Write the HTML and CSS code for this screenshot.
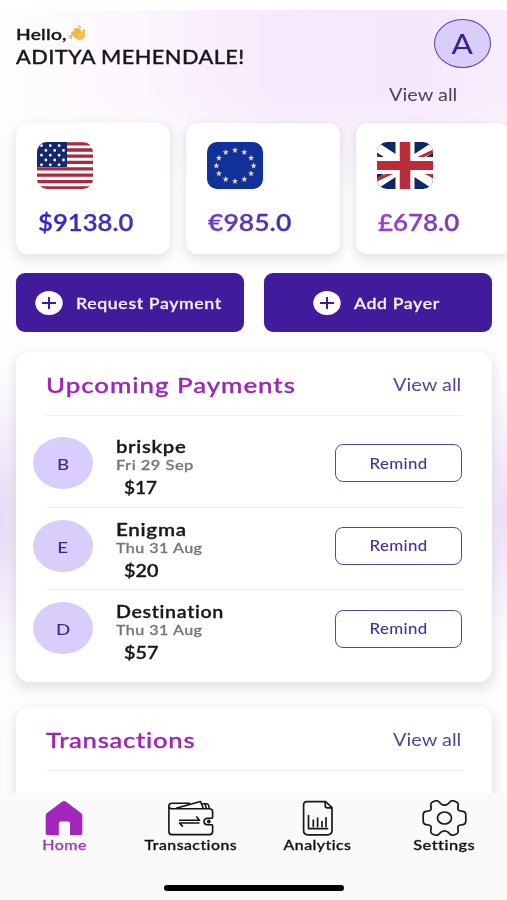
FILE: index.html
```html
<!DOCTYPE html>
<html lang="en">
<head>
<meta charset="utf-8">
<title>Payments</title>
<link rel="stylesheet" href="styles.css">
</head>
<body>
<div class="app">
  <header class="header">
    <div class="greeting">
      <div class="hello"><span class="t sx-120">Hello,</span>
        <svg class="wave" viewBox="0 0 18 17" width="18" height="17">
          <path d="M3.5 7.2 Q4 5.6 5.6 6.4 L6 3.6 Q7 2.2 8.4 3.4 L9.8 2.8 Q11.2 2.4 11.8 3.8 L14 7.2 Q14.2 4.6 15.8 3.8 Q17.6 4.4 17 7 Q17.8 11.5 15.2 13.8 Q11.6 16.4 7.6 13.2 L3 9.4 Q2.4 8 3.5 7.2Z" fill="#f3c04a"/>
          <path d="M4.4 7.6 L8.2 10.6 M6.4 4.8 L10 8.6 M9 4 L12 7.6" stroke="#d99a32" stroke-width=".8" fill="none"/>
          <path d="M10 .8 Q12.2 1 13 2.8 M.6 10.6 Q1.4 13 4 13.6 M2.2 9.8 Q2.8 11.6 4.4 12" stroke="#8d8a93" stroke-width=".9" fill="none"/>
        </svg>
      </div>
      <div class="user"><span class="t sx-119">ADITYA MEHENDALE!</span></div>
    </div>
    <div class="profile"><span class="t center sx-117">A</span></div>
  </header>
  <div class="accounts-link"><span class="t right sx-117">View all</span></div>

  <section class="accounts">
    <article class="account">
      <svg class="flag" viewBox="0 0 56 47" width="56" height="47">
        <path fill="#fff" d="M0 0h56v47H0z"/>
        <path stroke="#a82a3c" stroke-width="3.3" d="M0 1.8h56M0 8h56M0 14.2h56M0 20.4h56M0 26.8h56M0 33.2h56M0 39.6h56M0 45.8h56"/>
        <path fill="#142a6b" d="M0 0h30v25H0z"/>
        <g stroke="#fff" stroke-width="2.8" stroke-linecap="round" stroke-dasharray="0 8.8">
          <path d="M4.5 3.6H27M4.5 13.2H27M4.5 22.8H27"/><path d="M8.9 8.4H27M8.9 18H27"/>
        </g>
      </svg>
      <div class="amount usd"><span class="t sx-114">$9138.0</span></div>
    </article>
    <article class="account">
      <svg class="flag" viewBox="0 0 56 47" width="56" height="47">
        <path fill="#12309a" d="M0 0h56v47H0z"/>
        <defs><path id="star" fill="#e3d8a0" d="M0-3.1.9-1 3.1-1 1.3.5 1.9 2.8 0 1.5-1.9 2.8-1.3.5-3.1-1-.9-1z"/></defs>
        <use href="#star" x="28" y="8.2"/><use href="#star" x="37.3" y="10.3"/><use href="#star" x="44.1" y="15.9"/><use href="#star" x="46.6" y="23.7"/><use href="#star" x="44.1" y="31.5"/><use href="#star" x="37.3" y="37.2"/><use href="#star" x="28" y="39.3"/><use href="#star" x="18.7" y="37.2"/><use href="#star" x="11.9" y="31.5"/><use href="#star" x="9.4" y="23.7"/><use href="#star" x="11.9" y="15.9"/><use href="#star" x="18.7" y="10.3"/>
      </svg>
      <div class="amount eur"><span class="t sx-118">€985.0</span></div>
    </article>
    <article class="account">
      <svg class="flag" viewBox="0 0 56 47" width="56" height="47">
        <path fill="#102766" d="M0 0h56v47H0z"/>
        <path stroke="#fff" stroke-width="9" d="M-8 0 64 47M64 0-8 47"/>
        <path fill="#bb2c3b" d="M0 13.5 6 16H0zM38 16 56 7.5V11L45 16zM0 35.5 11 31h7L0 39.5zM45 31h11v4.5z"/>
        <path stroke="#fff" stroke-width="19" d="M28 0v47"/><path stroke="#fff" stroke-width="17" d="M0 23.5h56"/>
        <path stroke="#bb2c3b" stroke-width="10.5" d="M28 0v47"/><path stroke="#bb2c3b" stroke-width="9" d="M0 23.5h56"/>
      </svg>
      <div class="amount gbp"><span class="t sx-115">£678.0</span></div>
    </article>
  </section>

  <div class="actions">
    <button class="action request">
      <svg viewBox="0 0 28 24" width="28" height="24"><ellipse cx="14" cy="12" rx="13.7" ry="12" fill="#fff"/><path d="M7 12h14M14 6v12" stroke="#401b9b" stroke-width="2"/></svg>
      <span class="t sx-121">Request Payment</span>
    </button>
    <button class="action add">
      <svg viewBox="0 0 28 24" width="28" height="24"><ellipse cx="14" cy="12" rx="13.7" ry="12" fill="#fff"/><path d="M7 12h14M14 6v12" stroke="#401b9b" stroke-width="2"/></svg>
      <span class="t sx-121">Add Payer</span>
    </button>
  </div>

  <section class="panel upcoming">
    <div class="panel-head"><h2 class="t sx-123">Upcoming Payments</h2><a class="t right sx-117">View all</a></div>
    <ul class="payments">
      <li class="payment">
        <div class="avatar"><span class="t center sx-117">B</span></div>
        <div class="details"><div class="name"><span class="t sx-123">briskpe</span></div><div class="date"><span class="t sx-122">Fri 29 Sep</span></div><div class="sum"><span class="t sx-115">$17</span></div></div>
        <button class="remind"><span class="t center sx-118">Remind</span></button>
      </li>
      <li class="payment">
        <div class="avatar"><span class="t center sx-117">E</span></div>
        <div class="details"><div class="name"><span class="t sx-125">Enigma</span></div><div class="date"><span class="t sx-119">Thu 31 Aug</span></div><div class="sum"><span class="t sx-120">$20</span></div></div>
        <button class="remind"><span class="t center sx-118">Remind</span></button>
      </li>
      <li class="payment">
        <div class="avatar"><span class="t center sx-117">D</span></div>
        <div class="details"><div class="name"><span class="t sx-119">Destination</span></div><div class="date"><span class="t sx-119">Thu 31 Aug</span></div><div class="sum"><span class="t sx-120">$57</span></div></div>
        <button class="remind"><span class="t center sx-118">Remind</span></button>
      </li>
    </ul>
  </section>

  <section class="panel transactions">
    <div class="panel-head"><h2 class="t sx-122">Transactions</h2><a class="t right sx-117">View all</a></div>
    <ul class="payments"><li class="payment"><div class="avatar"></div></li></ul>
  </section>

  <nav class="tabs">
    <div class="tab-row">
      <a class="tab active">
        <svg viewBox="0 0 46 36" width="46" height="36"><path fill="#a226bd" d="M4.7 15.6Q4.7 14 6 13L21.3 1.6Q23 .4 24.7 1.6L40 13Q41.3 14 41.3 15.6V33.2Q41.3 35 39.4 35H29V23.2Q29 21.6 27.4 21.6H19.4Q17.8 21.6 17.8 23.2V35H6.6Q4.7 35 4.7 33.2Z"/></svg>
        <span class="t center sx-120">Home</span>
      </a>
      <a class="tab">
        <svg viewBox="0 0 46 36" width="46" height="36" fill="none" stroke="#111" stroke-width="1.6" stroke-linejoin="round">
          <path d="M.9 5V31.5Q.9 34.6 4 34.6H41.4Q44.6 34.6 44.6 31.5V25M44.6 18V11.5Q44.6 8.8 41.4 8.8H4.5Q.9 8.8.9 5.8Q.9 3.2 4.5 3.2H22M8 8.2 32.5 1.5 35.3 8.5M34.2 3.8H38.5Q41 4 41.2 8.5M37 4.5 38.4 8.5"/>
          <path d="M44.8 18.2H39.4Q36 18.6 36 21.4 36 24.4 39.4 24.8H44.8"/><circle cx="40.8" cy="21.5" r="1.1"/>
          <path d="M11 20.2H31.5L28.3 16.4M31.5 23H11.5L14.8 26.6"/>
        </svg>
        <span class="t center sx-119">Transactions</span>
      </a>
      <a class="tab">
        <svg viewBox="0 0 46 36" width="46" height="36" fill="none" stroke="#181818" stroke-width="1.7" stroke-linejoin="round" stroke-linecap="round">
          <path d="M12 1.6H30.6L37 7.6V30.6Q37 34.8 32.4 34.8H13Q8.6 34.8 8.6 30.6V5.4Q8.6 1.6 12 1.6ZM30.2 2V5.4Q30.2 7.8 32.6 7.8H36.5"/>
          <path d="M13.5 15.5V28.6H32.6M18.3 20V26.5M22.6 18V26.5M27 21.5V26.5M31 17.8V26.5"/>
        </svg>
        <span class="t center sx-119">Analytics</span>
      </a>
      <a class="tab">
        <svg viewBox="0 0 46 36" width="46" height="36" fill="none" stroke="#181818" stroke-width="1.7" stroke-linejoin="round">
          <path d="M1.2 15Q1.2 11.8 4 11.4L6.5 11Q9.8 10.4 9 7L8.8 5Q8.5 3 10.5 2L13 1Q15.5.2 17 1.8L19 3.8Q22.5 6.5 26 3.8L28 1.8Q29.5.2 32 1L34.5 2Q36.5 3 36.2 5L36 7Q35.2 10.4 38.5 11L41 11.4Q43.8 11.8 43.8 15V21Q43.8 24.2 41 24.6L38.5 25Q35.2 25.6 36 29L36.2 31Q36.5 33 34.5 34L32 35Q29.5 35.8 28 34.2L26 32.2Q22.5 29.5 19 32.2L17 34.2Q15.5 35.8 13 35L10.5 34Q8.5 33 8.8 31L9 29Q9.8 25.6 6.5 25L4 24.6Q1.2 24.2 1.2 21Z"/>
          <ellipse cx="22.5" cy="18" rx="7" ry="6"/>
        </svg>
        <span class="t center sx-123">Settings</span>
      </a>
    </div>
    <div class="home-bar"></div>
  </nav>
</div>
</body>
</html>
```
FILE: styles.css
```css
* { box-sizing: border-box; }
body { margin: 0; font-family: Lato, "Noto Sans", sans-serif; color: #19171c; }
h2, ul { margin: 0; padding: 0; font-weight: 500; list-style: none; }
button { font-family: inherit; padding: 0; border: 0; }

.app {
  width: 507px; height: 900px; overflow: hidden;
  display: flex; flex-direction: column;
  border-top: 10px solid #fff;
  background:
    radial-gradient(ellipse 34px 150px at 0 510px, #e6d8f5 0%, rgba(238, 226, 250, .6) 55%, transparent 100%),
    radial-gradient(ellipse 30px 140px at 100% 505px, #ebdff7 0%, rgba(240, 230, 251, .6) 55%, transparent 100%),
    linear-gradient(to bottom, transparent 80px, #fdfdfe 190px),
    linear-gradient(to right, #fefdfe 0, #fcf6fd 140px, #f7e8fc 280px, #f6e7fc 420px, #f9edfd 100%);
}

/* Wide letterforms */
.t { display: inline-block; white-space: nowrap; transform: scaleX(var(--sx)); transform-origin: left center; }
.right { transform-origin: right center; }
.center { transform-origin: center; }
.sx-114 { --sx: 1.14; }
.sx-115 { --sx: 1.15; }
.sx-117 { --sx: 1.17; }
.sx-118 { --sx: 1.18; }
.sx-119 { --sx: 1.19; }
.sx-120 { --sx: 1.2; }
.sx-121 { --sx: 1.21; }
.sx-122 { --sx: 1.22; }
.sx-123 { --sx: 1.23; }
.sx-125 { --sx: 1.25; }
.hello, .user, .amount, .action, .panel-head h2, .details, .tab { -webkit-text-stroke-width: .3px; }

.header { display: flex; justify-content: space-between; height: 73px; padding: 9px 16px 0; flex: none; }
.greeting { padding-top: 3px; }
.hello { display: flex; height: 24px; line-height: 23px; font-size: 16px; font-weight: 600; letter-spacing: .2px; }
.wave { margin: 3px 0 0 10px; }
.user { line-height: 23px; font-size: 18.3px; font-weight: 500; letter-spacing: .35px; }
.profile {
  width: 57px; height: 49px; border: 1.5px solid #5a4595; border-radius: 50%;
  background: #d9cdfb; color: #3c1c91; font-size: 27px; line-height: 48px; text-align: center;
}
.accounts-link { flex: none; height: 40px; padding-right: 50px; text-align: right; font-size: 17px; line-height: 23px; color: #4b4452; }

.accounts { display: flex; gap: 16px; flex: none; padding-left: 16px; height: 131px; }
.account { flex: none; width: 154px; padding: 19px 0 0 21px; border-radius: 12px; background: #fff; box-shadow: 0 4px 10px 2px rgba(40, 35, 50, .1); }
.flag { display: block; border-radius: 10px; }
.amount { margin: 20px 0 0 1px; line-height: 28px; font-size: 22.5px; font-weight: 600; }
.amount .t { color: transparent; -webkit-background-clip: text; background-clip: text; }
.usd .t { background-image: linear-gradient(90deg, #2b28c8, #4a31b2); }
.eur .t { background-image: linear-gradient(90deg, #6d3bc9, #4230aa); }
.gbp .t { background-image: linear-gradient(90deg, #9844d2, #743caf); }
.usd, .eur, .gbp { -webkit-text-stroke-color: transparent; }

.actions { display: grid; grid-template-columns: 228px 228px; gap: 20px; flex: none; margin: 19px 0 20px 16px; }
.action {
  display: flex; align-items: center; gap: 13px; height: 59px; border-radius: 9px;
  background: #401b9b; color: #f4effc; font-size: 14.7px; font-weight: 500; letter-spacing: .5px;
}
.request { padding-left: 19px; }
.add { padding-left: 49px; }

.panel { flex: none; margin: 0 15px 25px 16px; height: 330px; border-radius: 14px; background: #fff; box-shadow: 0 5px 10px 3px rgba(40, 35, 50, .1); }
.panel-head { display: flex; justify-content: space-between; align-items: center; height: 64px; margin: 0 29px; padding: 1px 2px 0 1px; border-bottom: 1px solid #f0eff1; }
.panel-head h2 { font-size: 21px; letter-spacing: .8px; color: #9a27b3; }
.panel-head .sx-122 { letter-spacing: .6px; }
.panel-head a { font-size: 17px; color: #56459a; }
.payments { padding-top: 9px; }
.payment { display: grid; grid-template-columns: 60px 1fr 127px; column-gap: 23px; height: 82.7px; padding: 0 30px 0 17px; position: relative; }
.payment:not(:last-child)::after { content: ""; position: absolute; left: 29px; right: 29px; bottom: 0; height: 1px; background: #f0eff1; }
.avatar { width: 60px; height: 52px; margin-top: 12px; border-radius: 50%; background: #d9cdfb; color: #42229a; font-size: 16px; line-height: 53px; text-align: center; }
.details { padding-top: 12px; white-space: nowrap; }
.name { line-height: 20px; font-size: 16.5px; font-weight: 600; letter-spacing: .55px; }
.date { line-height: 16px; font-size: 13.5px; font-weight: 500; letter-spacing: .4px; color: #77757a; }
.sum { padding-left: 8px; line-height: 31px; font-size: 16.5px; font-weight: 600; }
.remind { height: 38px; margin-top: 19.3px; border: 1.5px solid #5a4898; border-radius: 8px; background: #fff; color: #48309a; font-size: 14.3px; font-weight: 500; letter-spacing: .3px; }
.transactions { margin-bottom: 0; height: 86px; border-radius: 14px 14px 0 0; }
.transactions .payments { padding-top: 9.5px; }

.tabs { flex: none; height: 107px; padding-top: 7px; background: #fafafa; position: relative; }
.tab-row { display: grid; grid-template-columns: repeat(4, 1fr); height: 85px; padding-left: 1px; margin-right: -1px; }
.tab { display: flex; flex-direction: column; align-items: center; font-size: 13.3px; font-weight: 500; letter-spacing: .4px; line-height: 18px; color: #111; }
.tab svg { display: block; }
.active { color: #a33abf; }
.home-bar { width: 180px; height: 6px; margin: 0 auto; border-radius: 3px; background: #000; }
```
